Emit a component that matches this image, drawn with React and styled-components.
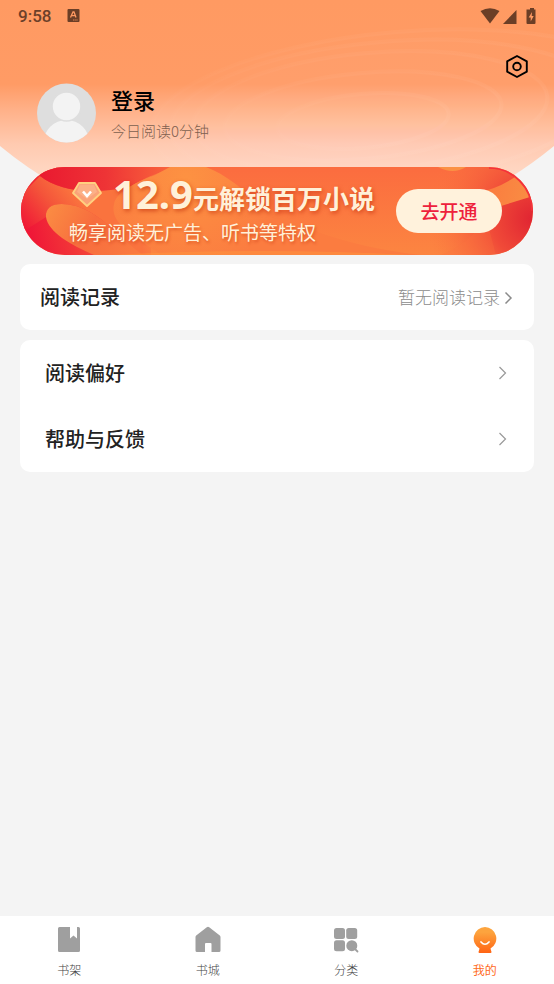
import React from "react";
import styled, { createGlobalStyle } from "styled-components";

const GlobalStyle = createGlobalStyle`
  *, *::before, *::after { box-sizing: border-box; }
  body {
    margin: 0;
    background: #f4f4f4;
    font-family: "Noto Sans CJK SC", "Noto Sans", sans-serif;
  }
  button { font: inherit; border: 0; padding: 0; background: none; cursor: pointer; }
  a { color: inherit; text-decoration: none; }
  svg { display: block; flex: none; }
`;

const Page = styled.div`
  position: relative;
  display: flex;
  flex-direction: column;
  min-height: 100vh;
  background: #f4f4f4;
`;

const HeaderArt = styled.svg`
  position: absolute;
  top: 0;
  left: 0;
  width: 100%;
  height: 240px;
`;

const Content = styled.div`
  position: relative;
  flex: 1;
  display: flex;
  flex-direction: column;
`;

const StatusBar = styled.div`
  display: flex;
  align-items: center;
  justify-content: space-between;
  height: 32px;
  padding: 0 16px 0 18px;
  color: #6b4029;
`;

const StatusGroup = styled.div`
  display: flex;
  align-items: center;
  gap: 16px;
`;

const Clock = styled.span`
  font: 500 17px/20px Roboto, sans-serif;
`;

const Toolbar = styled.div`
  display: flex;
  justify-content: flex-end;
  align-items: flex-end;
  height: 51px;
  padding: 0 25px 4px;
`;

const Profile = styled.a`
  display: flex;
  align-items: center;
  gap: 15px;
  padding: 0 36px;
`;

const ProfileText = styled.div`
  display: flex;
  flex-direction: column;
  gap: 6px;
`;

const LoginName = styled.strong`
  font-size: 22px;
  line-height: 30px;
  font-weight: 500;
  color: #000;
`;

const ReadTime = styled.span`
  font-size: 15px;
  line-height: 22px;
  font-weight: 300;
  color: #80604f;
`;

const Banner = styled.section`
  position: relative;
  display: flex;
  align-items: center;
  justify-content: space-between;
  height: 88px;
  margin: 24px 21px 9px;
  padding: 0 31px 0 48px;
  border-radius: 44px;
  overflow: hidden;
  color: #fff1d9;
`;

const BannerArt = styled.svg`
  position: absolute;
  inset: 0;
  width: 100%;
  height: 100%;
`;

const Offer = styled.div`
  position: relative;
  display: flex;
  flex-direction: column;
  padding-bottom: 6px;
  white-space: nowrap;
`;

const OfferTitle = styled.h2`
  display: flex;
  align-items: baseline;
  height: 48px;
  margin: 0;
  font-size: 26px;
  line-height: 48px;
  font-weight: 700;
  text-shadow: 1px 2px 4px rgba(190, 40, 10, 0.6);
`;

const Gem = styled.svg`
  align-self: center;
  margin: 0 11px 0 3px;
`;

const Price = styled.span`
  font-family: "Noto Sans", sans-serif;
  font-size: 40px;
  font-weight: 700;
`;

const OfferNote = styled.p`
  margin: 0;
  font-size: 19px;
  line-height: 28px;
  text-shadow: 1px 2px 3px rgba(190, 40, 10, 0.45);
`;

const OpenButton = styled.button`
  && {
    position: relative;
    width: 106px;
    height: 44px;
    padding-bottom: 2px;
    border-radius: 22px;
    background: #fff2dc;
    color: #ee213c;
    font-size: 19px;
    font-weight: 500;
  }
`;

const Card = styled.section`
  margin: 0 20px 10px;
  border-radius: 10px;
  background: #fff;
`;

const Row = styled.a`
  display: flex;
  align-items: center;
  justify-content: space-between;
  height: 66px;
  padding: ${(p) => (p.$inset ? "0 27px 0 25px" : "0 21px 0 20px")};
`;

const RowTitle = styled.span`
  font-size: 20px;
  line-height: 28px;
  font-weight: 500;
  color: #222;
`;

const RowValue = styled.span`
  display: flex;
  align-items: center;
  gap: 4px;
  font-size: 17px;
  line-height: 24px;
  font-weight: 300;
  color: #8c8c8c;
`;

const TabBar = styled.nav`
  position: sticky;
  bottom: 0;
  display: grid;
  grid-template-columns: repeat(4, 1fr);
  height: 68px;
  background: #fff;
`;

const Tab = styled.a`
  display: flex;
  flex-direction: column;
  align-items: center;
  gap: 8px;
  padding-top: 10px;
  font-size: 12px;
  line-height: 18px;
  font-weight: ${(p) => (p.$active ? 400 : 300)};
  color: ${(p) => (p.$active ? "#ff6a1c" : "#444")};
`;

const ripples = [
  [363, 121, 86, 27],
  [363, 116, 139, 43],
  [370, 112, 178, 59],
  [384, 112, 215, 70],
  [400, 112, 250, 80],
];

function HeaderBackground() {
  return (
    <HeaderArt viewBox="0 0 554 240" preserveAspectRatio="none" aria-hidden="true">
      <defs>
        <linearGradient id="sky" x1="0" y1="0" x2="0" y2="240" gradientUnits="userSpaceOnUse">
          <stop offset="0" stopColor="#ff9a62" />
          <stop offset="0.35" stopColor="#ff9b65" />
          <stop offset="0.46" stopColor="#ffb189" />
          <stop offset="0.6" stopColor="#ffcab0" />
          <stop offset="0.71" stopColor="#ffd6c1" />
          <stop offset="1" stopColor="#ffe6d8" />
        </linearGradient>
        <linearGradient id="ripple" x1="0" y1="0" x2="1" y2="0">
          <stop offset="0" stopColor="#fff" stopOpacity="0.01" />
          <stop offset="0.35" stopColor="#fff" stopOpacity="0.03" />
          <stop offset="1" stopColor="#fff" stopOpacity="0.04" />
        </linearGradient>
        <clipPath id="dome">
          <path d="M0 0H554V146Q440 240 277 240T0 146Z" />
        </clipPath>
      </defs>
      <g clipPath="url(#dome)">
        <path d="M0 0H554V240H0Z" fill="url(#sky)" />
        {ripples.map(([cx, cy, rx, ry]) => (
          <ellipse
            key={rx}
            cx={cx}
            cy={cy}
            rx={rx}
            ry={ry}
            fill="#fff"
            fillOpacity="0.014"
            stroke="url(#ripple)"
            strokeWidth="4"
            transform={`rotate(-5 ${cx} ${cy})`}
          />
        ))}
      </g>
    </HeaderArt>
  );
}

function BannerBackground() {
  return (
    <BannerArt viewBox="0 0 512 88" preserveAspectRatio="none" aria-hidden="true">
      <defs>
        <linearGradient id="base" x1="0" y1="0" x2="0" y2="1">
          <stop offset="0" stopColor="#fb6c3f" />
          <stop offset="1" stopColor="#fc8541" />
        </linearGradient>
        <linearGradient id="lower" x1="10" y1="80" x2="120" y2="50" gradientUnits="userSpaceOnUse">
          <stop offset="0" stopColor="#ef1537" />
          <stop offset="0.35" stopColor="#f23538" />
          <stop offset="1" stopColor="#fb7a40" />
        </linearGradient>
        <linearGradient id="topRed" x1="20" y1="0" x2="150" y2="0" gradientUnits="userSpaceOnUse">
          <stop offset="0" stopColor="#ea1a30" />
          <stop offset="0.5" stopColor="#ee3436" />
          <stop offset="1" stopColor="#f9653c" />
        </linearGradient>
        <linearGradient id="band" x1="0" y1="56" x2="46" y2="18" gradientUnits="userSpaceOnUse">
          <stop offset="0" stopColor="#f01836" />
          <stop offset="0.6" stopColor="#f4553a" />
          <stop offset="1" stopColor="#fa733e" />
        </linearGradient>
        <linearGradient id="petal" x1="25" y1="38" x2="110" y2="88" gradientUnits="userSpaceOnUse">
          <stop offset="0" stopColor="#fb8e43" />
          <stop offset="0.5" stopColor="#f76d3e" />
          <stop offset="1" stopColor="#fa7a40" />
        </linearGradient>
        <radialGradient id="glow" cx="165" cy="12" r="95" gradientUnits="userSpaceOnUse">
          <stop offset="0" stopColor="#fd9242" />
          <stop offset="1" stopColor="#fb7c40" />
        </radialGradient>
        <radialGradient id="rightRed" cx="512" cy="52" r="105" gradientUnits="userSpaceOnUse">
          <stop offset="0" stopColor="#e02432" />
          <stop offset="0.4" stopColor="#f04a38" />
          <stop offset="1" stopColor="#fb743f" stopOpacity="0" />
        </radialGradient>
        <linearGradient id="leaf" x1="466" y1="20" x2="508" y2="30" gradientUnits="userSpaceOnUse">
          <stop offset="0" stopColor="#fb7c3f" />
          <stop offset="1" stopColor="#f98c43" />
        </linearGradient>
      </defs>
      <path d="M0 0H512V88H0Z" fill="url(#base)" />
      <path d="M0 0H130V88H0Z" fill="url(#lower)" />
      <path d="M0 28L19 9C36 22 60 27 96 22L100 40L122 60V88C98 71 82 47 55 39C36 34 24 38 25 50L0 66Z" fill="url(#band)" />
      <path d="M15 0H154C130 8 118 14 109 20C70 28 38 24 19 9Z" fill="url(#topRed)" />
      <path d="M93 37C95 25 114 16 134 8L149 0H185C210 10 222 24 245 40C280 62 330 80 400 88H140C116 70 88 58 93 37Z" fill="url(#glow)" />
      <path d="M25 50C24 38 36 34 55 39C82 47 98 71 122 88H73C50 78 27 65 25 50Z" fill="url(#petal)" />
      <path d="M90 88Q240 80 390 88Z" fill="#ff9340" opacity="0.6" />
      <path d="M400 0H512V88H400Z" fill="url(#rightRed)" />
      <path d="M417 0H445Q432 8 417 0Z" fill="#fb9144" />
      <path d="M420 88Q450 76 465 50L475 88Z" fill="#fb7540" opacity="0.25" />
      <path d="M455 26Q476 22 494 10Q504 18 509 30L470 42Z" fill="url(#leaf)" />
      <path d="M468 1A43 43 0 0 1 511 44" fill="none" stroke="#f5303c" strokeWidth="1.600" />
    </BannerArt>
  );
}

function Avatar() {
  return (
    <svg width="60" height="60" viewBox="0 0 60 60" aria-hidden="true">
      <defs>
        <clipPath id="face">
          <circle cx="30.500" cy="30" r="29.500" />
        </clipPath>
      </defs>
      <g clipPath="url(#face)">
        <path d="M0 0H60V60H0Z" fill="#dedede" />
        <ellipse cx="30.500" cy="60" rx="23" ry="23" fill="#f3f3f3" />
        <circle cx="30.500" cy="23.500" r="14.500" fill="#f3f3f3" stroke="#dedede" strokeWidth="1.600" />
      </g>
    </svg>
  );
}

function GemIcon() {
  return (
    <Gem width="30" height="26" viewBox="0 0 30 26" aria-hidden="true">
      <path d="M7 2H23L29 12L15 25L1 12Z" fill="#fba278" stroke="#ffd080" strokeWidth="1.800" strokeLinejoin="round" />
      <path d="M8 3.500H22L25 11L15 18L5 11Z" fill="#fdbc94" opacity="0.55" />
      <path d="M11 10.500L15 15L19 10.500" fill="none" stroke="#fff" strokeWidth="2.600" />
    </Gem>
  );
}

const Chevron = ({ bold }) => (
  <svg width="9" height="14" viewBox="0 0 9 14" fill="none" aria-hidden="true">
    {bold ? (
      <path d="M1.500 2.500L7 8L1.500 13.500" stroke="#8a8a8a" strokeWidth="1.500" />
    ) : (
      <path d="M1.500 1L7.500 7L1.500 13" stroke="#999" strokeWidth="1.200" />
    )}
  </svg>
);

const ShelfIcon = () => (
  <svg width="26" height="27" viewBox="0 0 26 27" aria-hidden="true">
    <path d="M3.500 1H14V12.500L17.500 9.500L21 12.500V1H22.500Q24 1 24 2.500V24.500Q24 26 22.500 26H3.500Q2 26 2 24.500V2.500Q2 1 3.500 1Z" fill="#9f9f9f" />
  </svg>
);

const StoreIcon = () => (
  <svg width="26" height="27" viewBox="0 0 26 27" aria-hidden="true">
    <path d="M11.800 1.300Q13 .4 14.200 1.300L24.800 9.600Q25.500 10.200 25.500 11V24.500Q25.500 26 24 26H16.500V18Q16.500 17 15.500 17H11Q10 17 10 18V26H2Q.5 26 .5 24.500V11Q.5 10.200 1.200 9.600Z" fill="#9f9f9f" />
  </svg>
);

const CategoryIcon = () => (
  <svg width="26" height="27" viewBox="0 0 26 27" fill="#9f9f9f" aria-hidden="true">
    <rect x="1" y="2" width="11" height="11" rx="2.500" />
    <rect x="13.200" y="2" width="11" height="11" rx="2.500" />
    <rect x="1" y="14.200" width="11" height="11" rx="2.500" />
    <circle cx="18.800" cy="19.700" r="5.500" />
    <path d="M22 23L24.500 25.500" stroke="#9f9f9f" strokeWidth="1.800" strokeLinecap="round" />
  </svg>
);

const MineIcon = () => (
  <svg width="26" height="27" viewBox="0 0 26 27" aria-hidden="true">
    <defs>
      <linearGradient id="mine" x1="0" y1="0" x2="0" y2="1">
        <stop offset="0.2" stopColor="#fda43e" />
        <stop offset="1" stopColor="#ff6414" />
      </linearGradient>
    </defs>
    <path d="M13 1A11.500 11.500 0 0 1 18.500 22.500L19.500 26Q19.500 27 18.500 27H7.500Q6.500 27 6.500 26L7.500 22.500A11.500 11.500 0 0 1 13 1Z" fill="url(#mine)" />
    <path d="M9 16Q13 20.500 17 16" fill="none" stroke="#fff" strokeWidth="1.700" strokeLinecap="round" />
  </svg>
);

const tabs = [
  { label: "书架", Icon: ShelfIcon },
  { label: "书城", Icon: StoreIcon },
  { label: "分类", Icon: CategoryIcon },
  { label: "我的", Icon: MineIcon, active: true },
];

export default function App() {
  return (
    <Page>
      <GlobalStyle />
      <HeaderBackground />
      <Content>
        <StatusBar>
          <StatusGroup>
            <Clock>9:58</Clock>
            <svg width="13" height="14" viewBox="0 0 13 14" aria-hidden="true">
              <rect x="0.500" y="0" width="12" height="13" rx="1" fill="#6b3e26" />
              <path d="M3.500 8.500L6 3H7L9 8.500M4.500 6.700H8" fill="none" stroke="#ff9a62" strokeWidth="1.300" />
              <path d="M6 11H11" stroke="#ff9a62" strokeWidth="0.800" strokeDasharray="1.500 0.700" />
            </svg>
          </StatusGroup>
          <svg width="58" height="18" viewBox="0 0 58 18" fill="#6b3e26" aria-hidden="true">
            <path d="M0.500 4Q10 -1.500 19.500 4L10 16.500Z" />
            <path d="M36.500 3V17H23Z" />
            <path d="M49 2.500H50V1H54V2.500H55.500V16Q55.500 17 54.500 17H47.500Q46.500 17 46.500 16V2.500Z" />
            <path d="M52 5L48.700 10.500H50.700V14.500L53.700 9H51.700Z" fill="#ff9a62" />
          </svg>
        </StatusBar>
        <Toolbar>
          <button type="button" aria-label="设置">
            <svg width="24" height="24" viewBox="0 0 24 24" fill="none" stroke="#000" strokeWidth="1.900" strokeLinejoin="round" aria-hidden="true">
              <path d="M12 1L21.800 6.300V16.700L12 22L2.200 16.700V6.300Z" />
              <circle cx="12" cy="11.500" r="3.800" />
            </svg>
          </button>
        </Toolbar>
        <Profile href="#login">
          <Avatar />
          <ProfileText>
            <LoginName>登录</LoginName>
            <ReadTime>今日阅读0分钟</ReadTime>
          </ProfileText>
        </Profile>
        <Banner>
          <BannerBackground />
          <Offer>
            <OfferTitle>
              <GemIcon />
              <Price>12.9</Price>
              元解锁百万小说
            </OfferTitle>
            <OfferNote>畅享阅读无广告、听书等特权</OfferNote>
          </Offer>
          <OpenButton type="button">去开通</OpenButton>
        </Banner>
        <Card>
          <Row href="#history">
            <RowTitle>阅读记录</RowTitle>
            <RowValue>
              暂无阅读记录
              <Chevron bold />
            </RowValue>
          </Row>
        </Card>
        <Card>
          <Row href="#preferences" $inset>
            <RowTitle>阅读偏好</RowTitle>
            <Chevron />
          </Row>
          <Row href="#help" $inset>
            <RowTitle>帮助与反馈</RowTitle>
            <Chevron />
          </Row>
        </Card>
      </Content>
      <TabBar>
        {tabs.map(({ label, Icon, active }) => (
          <Tab key={label} href={`#${label}`} $active={active} aria-current={active ? "page" : undefined}>
            <Icon />
            {label}
          </Tab>
        ))}
      </TabBar>
    </Page>
  );
}
